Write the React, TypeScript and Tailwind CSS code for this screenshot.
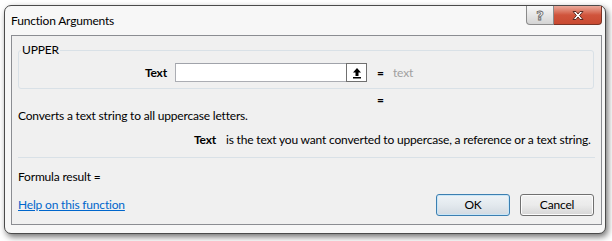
import React from "react";

const font = { fontFamily: 'Lato, "Noto Sans", Arial, sans-serif' };

function UpArrowIcon() {
  return (
    <svg width="12" height="12" viewBox="0 0 12 12">
      <path d="M6 1 L10 5.5 L7.5 5.5 L7.5 9 L4.5 9 L4.5 5.5 L2 5.5 Z" fill="#000" />
      <rect x="2" y="10" width="8" height="1.5" fill="#000" />
    </svg>
  );
}

function CloseGlyph() {
  return (
    <svg width="14" height="11" viewBox="0 0 14 11">
      <path
        d="M2 1.5 L5 1.5 L7 4 L9 1.5 L12 1.5 L8.6 5.5 L12 9.5 L9 9.5 L7 7 L5 9.5 L2 9.5 L5.4 5.5 Z"
        fill="#fff"
        stroke="#5a2a22"
        strokeWidth="1"
        strokeLinejoin="round"
      />
    </svg>
  );
}

export default function App() {
  return (
    <div className="w-[612px] h-[241px] bg-white overflow-hidden pl-[4px] pt-[5px] tracking-[-0.18px]" style={font}>
      <div className="w-[602px] h-[229px] border border-[#4b4b4b] rounded-[7px] bg-[#f7f7f7] shadow-[2px_3px_6px_rgba(0,0,0,0.55)] flex flex-col">
        {/* title bar */}
        <div className="h-[29px] flex items-start relative">
          <div className="pl-[6px] pt-[7px] text-[12px] leading-[16px] text-black">Function Arguments</div>
          <div className="ml-auto mr-[3px] flex">
            <div className="w-[28px] h-[19px] border border-[#8a8a8a] border-t-0 rounded-bl-[4px] bg-gradient-to-b from-[#f8f8f8] via-[#e6e6e6] to-[#d4d4d4] flex items-center justify-center">
              <span className="text-[13px] leading-none font-bold text-[#f2f2f2]" style={{ WebkitTextStroke: "0.8px #666", fontFamily: '"DejaVu Sans", sans-serif' }}>?</span>
            </div>
            <div className="w-[48px] h-[19px] border border-[#7a3325] border-t-0 border-l-0 rounded-br-[4px] bg-gradient-to-b from-[#e9a99b] via-[#d0543c] to-[#c94a31] flex items-center justify-center">
              <CloseGlyph />
            </div>
          </div>
        </div>
        {/* client */}
        <div className="ml-[6px] mr-[3px] h-[190px] border border-[#8b8d92] bg-[#f0f0f0] flex flex-col px-[6px] pr-[7px] text-[12px] text-black">
          {/* group box */}
          <div className="relative mt-[14px] h-[39px] border border-[#d9e1e7] rounded-[3px]">
            <div className="absolute left-[2px] top-[-9px] px-[1px] bg-[#f0f0f0] leading-[16px]">UPPER</div>
            <div className="flex items-center h-[19px] mt-[12px]">
              <div className="w-[148px] text-right font-bold leading-[16px]">Text</div>
              <div className="ml-[8px] w-[192px] h-[19px] border border-[#abadb3] border-t-[#a0a3aa] bg-white flex justify-end">
                <div className="w-[21px] h-[19px] -mt-px -mr-px border border-[#707070] bg-white flex items-center justify-center">
                  <UpArrowIcon />
                </div>
              </div>
              <div className="ml-[10px] w-[16px] font-bold leading-[16px]">=</div>
              <div className="text-[#a0a0a0] leading-[16px]">text</div>
            </div>
          </div>
          <div className="mt-[3px] h-[16px] leading-[16px] pl-[359px] font-bold">=</div>
          <div className="h-[16px] leading-[16px] whitespace-nowrap">Converts a text string to all uppercase letters.</div>
          <div className="mt-[8px] h-[16px] leading-[16px] flex whitespace-nowrap">
            <div className="pl-[176px] w-[208px] shrink-0 font-bold">Text</div>
            <div>is the text you want converted to uppercase, a reference or a text string.</div>
          </div>
          <div className="mt-[9px] h-px bg-[#d9e1e7] mr-[-1px]" />
          <div className="mt-[11px] h-[16px] leading-[16px]">Formula result =</div>
          <div className="mt-[9px] h-[22px] flex items-center">
            <a className="text-[#0066cc] underline leading-[16px]" href="#">Help on this function</a>
            <div className="ml-auto flex gap-[10px]">
              <button className="w-[74px] h-[22px] border border-[#3c7fb1] rounded-[3px] bg-gradient-to-b from-[#eef3f7] via-[#e3e9ee] to-[#d2dae1] text-[12px] leading-none shadow-[inset_0_0_0_1px_#c9e6f7]">OK</button>
              <button className="w-[74px] h-[22px] border border-[#707070] rounded-[3px] bg-gradient-to-b from-[#f2f2f2] via-[#ebebeb] to-[#d6d6d6] text-[12px] leading-none shadow-[inset_0_0_0_1px_#fcfcfc]">Cancel</button>
            </div>
          </div>
        </div>
      </div>
    </div>
  );
}
